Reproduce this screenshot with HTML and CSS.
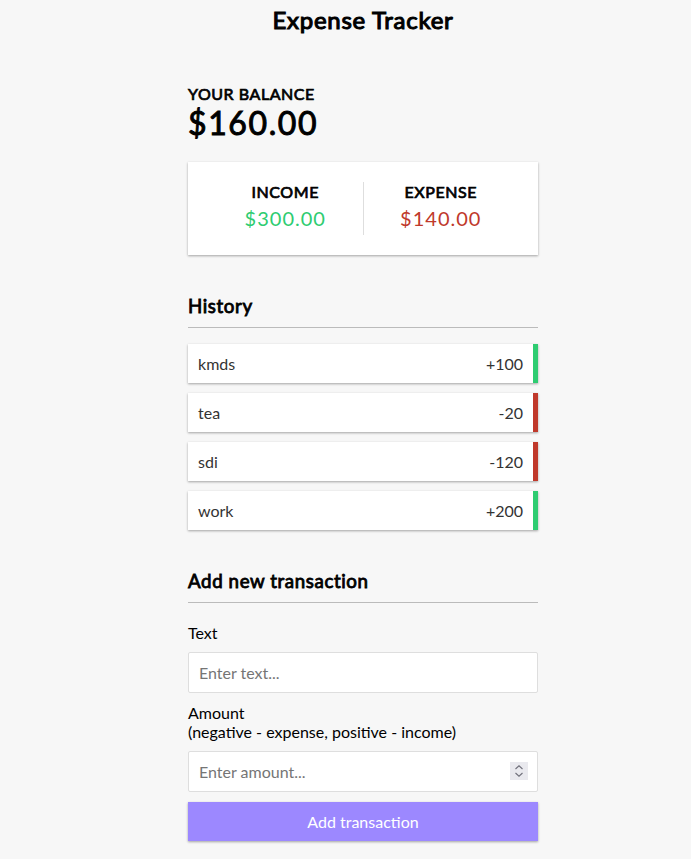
FILE: index.html
```html
<!DOCTYPE html>
<html lang="en">
<head>
<meta charset="UTF-8">
<title>Expense Tracker</title>
<link rel="stylesheet" href="styles.css">
</head>
<body>
  <h2 class="title">Expense Tracker</h2>
  <div class="container">
    <h4>Your Balance</h4>
    <h1 class="balance">$160.00</h1>

    <div class="inc-exp-container">
      <div class="inc">
        <h4>Income</h4>
        <p class="money plus">$300.00</p>
      </div>
      <div>
        <h4>Expense</h4>
        <p class="money minus">$140.00</p>
      </div>
    </div>

    <h3>History</h3>
    <ul class="list">
      <li class="plus"><span>kmds</span><span>+100</span></li>
      <li class="minus"><span>tea</span><span>-20</span></li>
      <li class="minus"><span>sdi</span><span>-120</span></li>
      <li class="plus"><span>work</span><span>+200</span></li>
    </ul>

    <h3>Add new transaction</h3>
    <form class="form">
      <div class="form-control">
        <label for="text">Text</label>
        <input type="text" id="text" placeholder="Enter text...">
      </div>
      <div class="form-control">
        <label for="amount">Amount <br>(negative - expense, positive - income)</label>
        <div class="number-field">
          <input type="number" id="amount" placeholder="Enter amount...">
          <span class="spin" aria-hidden="true">
            <svg width="18" height="18" viewBox="0 0 18 18">
              <path d="M5.5 7 L9 3.8 L12.5 7" fill="none" stroke="#6f6f7a" stroke-width="1.1"/>
              <path d="M5.5 11 L9 14.2 L12.5 11" fill="none" stroke="#6f6f7a" stroke-width="1.1"/>
            </svg>
          </span>
        </div>
      </div>
      <button type="button" class="btn">Add transaction</button>
    </form>
  </div>
</body>
</html>
```

FILE: styles.css
```css
* {
  box-sizing: border-box;
}

body {
  background-color: #f7f7f7;
  display: flex;
  flex-direction: column;
  align-items: center;
  margin: 0;
  padding-left: 35px;
  font-family: "Lato", "Open Sans", sans-serif;
}

/* synthesized-bold look of the original (regular face emboldened) */
.title,
h1.balance,
h3,
h4 {
  font-weight: 400;
  -webkit-text-stroke: 0.045em currentColor;
}

.title {
  font-size: 24px;
  margin: 4.6px 0 19.92px;
  letter-spacing: 0.73px;
}

.container {
  margin: 30px auto;
  width: 350px;
}

h1.balance {
  font-size: 32px;
  letter-spacing: 1.6px;
  margin: 0;
  -webkit-text-stroke: 0.03em currentColor;
}

h3 {
  font-size: 18.72px;
  letter-spacing: 0.6px;
  border-bottom: 1px solid #bbb;
  padding-bottom: 10px;
  margin: 40px 0 10px;
}

h4 {
  font-size: 16px;
  letter-spacing: 0.55px;
  margin: 0;
  text-transform: uppercase;
}

.inc-exp-container {
  background-color: #fff;
  box-shadow: 0 1px 3px rgba(0, 0, 0, 0.12), 0 1px 2px rgba(0, 0, 0, 0.24);
  padding: 20px;
  display: flex;
  justify-content: space-between;
  margin: 20px 0;
}

.inc-exp-container > div {
  flex: 1;
  text-align: center;
}

.inc-exp-container > .inc {
  border-right: 1px solid #dedede;
}

.money {
  font-size: 20px;
  letter-spacing: 1px;
  margin: 5px 0;
}

.money.plus {
  color: #2ecc71;
}

.money.minus {
  color: #c0392b;
}

.list {
  list-style-type: none;
  padding: 0;
  margin: 16px 0 40px;
}

.list li {
  background-color: #fff;
  box-shadow: 0 1px 3px rgba(0, 0, 0, 0.12), 0 1px 2px rgba(0, 0, 0, 0.24);
  color: #333;
  display: flex;
  justify-content: space-between;
  padding: 10px;
  margin: 10px 0;
  font-size: 16px;
}

.list li.plus {
  border-right: 5px solid #2ecc71;
}

.list li.minus {
  border-right: 5px solid #c0392b;
}

.form {
  margin: 0;
}

label {
  display: inline-block;
  margin: 10px 0;
  font-size: 16px;
}

input[type="text"],
input[type="number"] {
  border: 1px solid #dedede;
  border-radius: 2px;
  display: block;
  font-family: "Lato", "Open Sans", sans-serif;
  font-size: 16px;
  padding: 10px;
  width: 100%;
  background: #fff;
  color: #333;
  line-height: normal;
}

input::placeholder {
  color: #757575;
}

input[type="number"] {
  -moz-appearance: textfield;
}

input[type="number"]::-webkit-inner-spin-button,
input[type="number"]::-webkit-outer-spin-button {
  -webkit-appearance: none;
  margin: 0;
}

.number-field {
  position: relative;
}

.spin {
  position: absolute;
  right: 10px;
  top: 11px;
  width: 18px;
  height: 18px;
  background: #e9e9ee;
  display: flex;
}

.btn {
  background-color: #9c88ff;
  box-shadow: 0 1px 3px rgba(0, 0, 0, 0.12), 0 1px 2px rgba(0, 0, 0, 0.24);
  color: #fff;
  border: 0;
  display: block;
  font-family: "Lato", "Open Sans", sans-serif;
  font-size: 16px;
  line-height: normal;
  margin: 10px 0 30px;
  padding: 10px;
  width: 100%;
}
```
